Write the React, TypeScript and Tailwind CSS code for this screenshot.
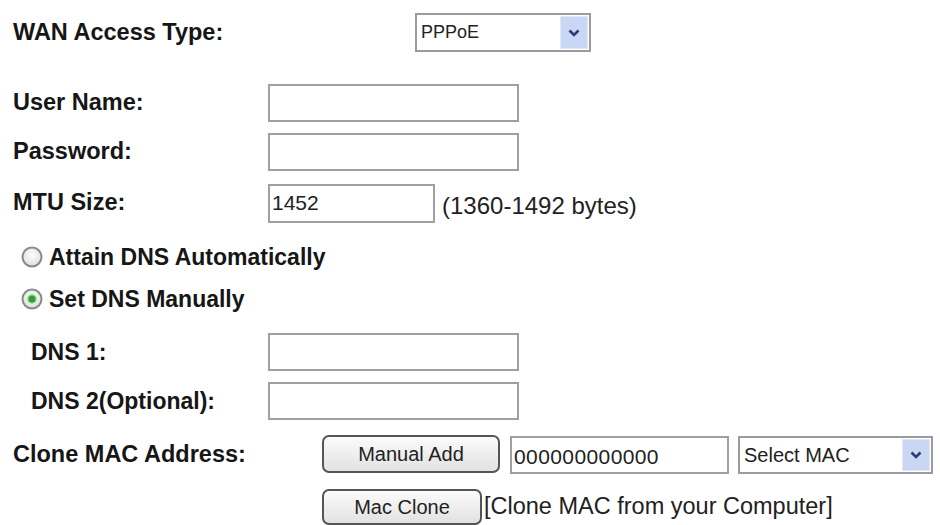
import React from 'react';

const Arrow = () => (
  <div className="w-[28px] self-stretch my-[1px] mr-[1px] bg-[#c9d6f4] border border-[#dfe7fa] flex items-center justify-center">
    <svg width="14" height="10" viewBox="0 0 14 10">
      <polyline points="2.5,2.5 7,7 11.5,2.5" fill="none" stroke="#2b3c74" strokeWidth="2.6" />
    </svg>
  </div>
);

const Select = ({ value, className, text }: { value: string; className: string; text: string }) => (
  <div className={`flex items-center border-2 border-[#9b9b9b] bg-white ${className}`}>
    <span className={`flex-1 pl-[4px] text-[#222] ${text}`}>{value}</span>
    <Arrow />
  </div>
);

const Field = ({ value = '', className = 'w-[251px]' }: { value?: string; className?: string }) => (
  <div className={`h-[38px] border-2 border-[#a0a0a0] bg-white flex items-center pl-[2px] text-[21px] text-[#222] ${className}`}>
    {value}
  </div>
);

const Radio = ({ checked }: { checked?: boolean }) => (
  <svg width="22" height="22" viewBox="0 0 22 22" className="ml-[8px] mr-[6px] shrink-0">
    <defs>
      <radialGradient id={checked ? 'rg1' : 'rg0'} cx="50%" cy="40%" r="60%">
        <stop offset="0%" stopColor="#ffffff" />
        <stop offset="100%" stopColor={checked ? '#cfe9d2' : '#dcdcdc'} />
      </radialGradient>
    </defs>
    <circle cx="11" cy="11" r="9.5" fill={`url(#${checked ? 'rg1' : 'rg0'})`} stroke="#8a8a8a" strokeWidth="2" />
    {checked && <circle cx="11" cy="11" r="4" fill="#2f9b3c" stroke="#7fcf87" strokeWidth="1.5" />}
  </svg>
);

const Button = ({ label, className }: { label: string; className: string }) => (
  <div className={`rounded-[7px] border-2 border-[#555] bg-gradient-to-b from-[#fbfbfb] to-[#e2e2e2] flex items-center justify-center text-[20px] text-[#222] ${className}`}>
    {label}
  </div>
);

const App: React.FC = () => {
  return (
    <div className="w-[940px] h-[525px] bg-white overflow-hidden pl-[13px] pt-[13px] text-[#161616]" style={{ fontFamily: '"Liberation Sans", Arial, sans-serif' }}>
      {/* WAN type */}
      <div className="flex items-center h-[39px]">
        <div className="w-[402px] text-[23.5px] font-bold">WAN Access Type:</div>
        <Select value="PPPoE" className="w-[176px] h-[39px]" text="text-[18px]" />
      </div>

      <div className="flex items-center mt-[32px]">
        <div className="w-[255px] text-[23.5px] font-bold">User Name:</div>
        <Field />
      </div>
      <div className="flex items-center mt-[11px]">
        <div className="w-[255px] text-[23.5px] font-bold">Password:</div>
        <Field />
      </div>
      <div className="flex items-center mt-[11px]">
        <div className="w-[255px] text-[23.5px] font-bold">MTU Size:</div>
        <Field value="1452" className="w-[167px] h-[39px]" />
        <span className="ml-[7px] mt-[6px] text-[24px] text-[#222]">(1360-1492 bytes)</span>
      </div>

      {/* DNS */}
      <div className="flex items-center h-[22px] mt-[22px]">
        <Radio />
        <span className="text-[23px] font-bold">Attain DNS Automatically</span>
      </div>
      <div className="flex items-center h-[22px] mt-[20px]">
        <Radio checked />
        <span className="text-[23px] font-bold">Set DNS Manually</span>
      </div>
      <div className="flex items-center mt-[23px]">
        <div className="w-[255px] pl-[18px] text-[23px] font-bold">DNS 1:</div>
        <Field />
      </div>
      <div className="flex items-center mt-[11px]">
        <div className="w-[255px] pl-[18px] text-[23px] font-bold">DNS 2(Optional):</div>
        <Field />
      </div>

      {/* Clone MAC */}
      <div className="flex items-center h-[40px] mt-[15px]">
        <div className="w-[309px] text-[23.5px] font-bold">Clone MAC Address:</div>
        <Button label="Manual Add" className="w-[178px] h-[38px] mb-[2px]" />
        <Field value="000000000000" className="ml-[10px] w-[219px] h-[38px] text-[21px] tracking-[0.4px] pt-[3px]" />
        <Select value="Select MAC" className="ml-[9px] w-[195px] h-[38px]" text="text-[20px]" />
      </div>
      <div className="flex items-center h-[36px] mt-[14px] pl-[309px]">
        <Button label="Mac Clone" className="w-[160px] h-[36px]" />
        <span className="ml-[2px] text-[23.5px] text-[#222]">[Clone MAC from your Computer]</span>
      </div>
    </div>
  );
};

export default App;
